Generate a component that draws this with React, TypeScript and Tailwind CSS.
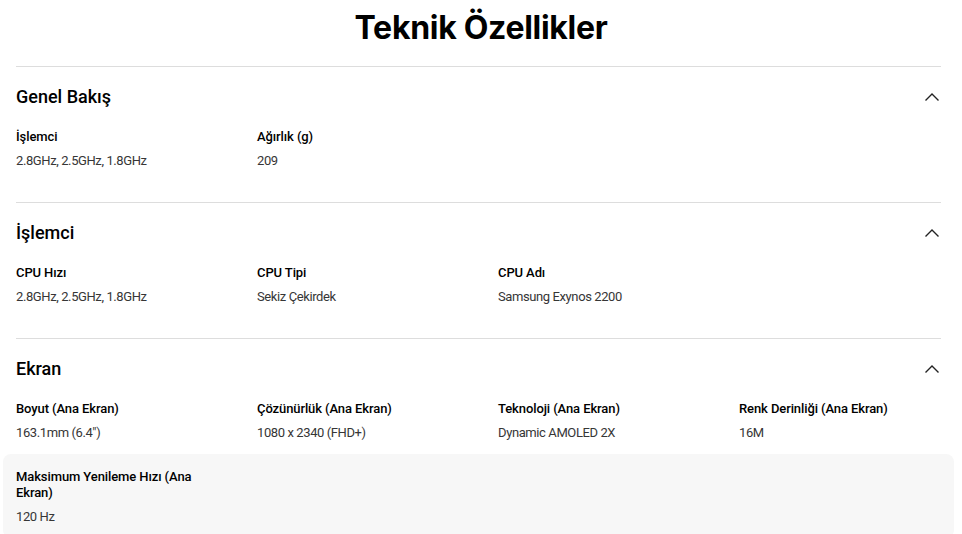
import React from "react";

type Item = { label: string; value: string };
type Section = { title: string; rows: Item[][]; highlightRow?: number };

const sections: Section[] = [
  {
    title: "Genel Bakış",
    rows: [
      [
        { label: "İşlemci", value: "2.8GHz, 2.5GHz, 1.8GHz" },
        { label: "Ağırlık (g)", value: "209" },
      ],
    ],
  },
  {
    title: "İşlemci",
    rows: [
      [
        { label: "CPU Hızı", value: "2.8GHz, 2.5GHz, 1.8GHz" },
        { label: "CPU Tipi", value: "Sekiz Çekirdek" },
        { label: "CPU Adı", value: "Samsung Exynos 2200" },
      ],
    ],
  },
  {
    title: "Ekran",
    highlightRow: 1,
    rows: [
      [
        { label: "Boyut (Ana Ekran)", value: "163.1mm (6.4\")" },
        { label: "Çözünürlük (Ana Ekran)", value: "1080 x 2340 (FHD+)" },
        { label: "Teknoloji (Ana Ekran)", value: "Dynamic AMOLED 2X" },
        { label: "Renk Derinliği (Ana Ekran)", value: "16M" },
      ],
      [{ label: "Maksimum Yenileme Hızı (Ana Ekran)", value: "120 Hz" }],
    ],
  },
];

function Chevron() {
  return (
    <svg width="16" height="10" viewBox="0 0 16 10" fill="none" className="mr-[1px]">
      <path d="M1.5 8.5 L8 2 L14.5 8.5" stroke="#222" strokeWidth="1.4" />
    </svg>
  );
}

export default function App() {
  return (
    <div
      className="w-[962px] h-[534px] overflow-hidden bg-white text-black"
      style={{ fontFamily: "Roboto, 'Noto Sans', sans-serif" }}
    >
      <h1
        className="h-[66px] pt-[6px] text-center text-[32px] font-bold leading-[44px] tracking-[-0.3px]"
        style={{ fontFamily: "Inter, 'Noto Sans', sans-serif" }}
      >
        Teknik Özellikler
      </h1>
      <div className="mx-4 w-[925px]">
        {sections.map((s) => (
          <section key={s.title} className="border-t border-[#dddddd] pb-[20px]">
            <div className="flex h-[47px] items-start justify-between pt-[18px]">
              <h2 className="text-[18px] font-medium leading-[24px] text-black">{s.title}</h2>
              <div className="mt-[7px]">
                <Chevron />
              </div>
            </div>
            {s.rows.map((row, ri) => (
              <div
                key={ri}
                className={
                  ri === s.highlightRow
                    ? "-ml-[13px] flex w-[951px] rounded-lg bg-[#f7f7f7] px-[13px] pt-[15px] pb-[13px]"
                    : "flex pt-[15px] pb-[13px]"
                }
              >
                {row.map((it) => (
                  <div key={it.label} className="w-[241px] shrink-0 pr-[52px]">
                    <div className="text-[13px] font-medium leading-[16px] tracking-[-0.1px] text-black">{it.label}</div>
                    <div className="mt-[8px] text-[13px] leading-[16px] tracking-[-0.4px] text-[#363636]">{it.value}</div>
                  </div>
                ))}
              </div>
            ))}
          </section>
        ))}
      </div>
    </div>
  );
}
